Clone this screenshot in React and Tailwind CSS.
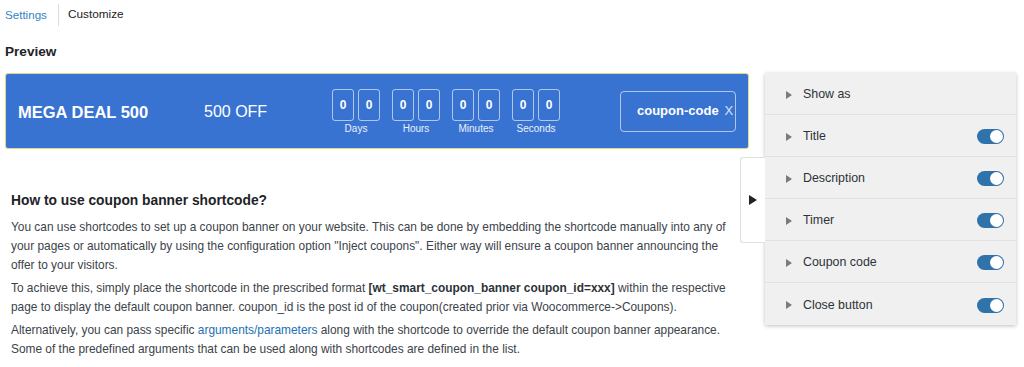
import React from "react";

const font = { fontFamily: "'Liberation Sans', Arial, sans-serif" };

function Digit() {
  return (
    <div className="w-[22px] h-[32px] border border-white/60 rounded-[3px] flex items-center justify-center text-[12px] font-bold text-white">
      0
    </div>
  );
}

function Unit({ label }) {
  return (
    <div className="flex flex-col items-center w-[50px]">
      <div className="flex gap-[4px]">
        <Digit />
        <Digit />
      </div>
      <div className="text-[10px] text-white/90 mt-[1px] leading-[14px]">{label}</div>
    </div>
  );
}

function Toggle() {
  return (
    <div className="w-[27px] h-[15px] rounded-full bg-[#3072aa] relative">
      <div className="absolute right-[1px] top-[1px] w-[13px] h-[13px] rounded-full bg-white" />
    </div>
  );
}

function Row({ label, toggle, last }) {
  return (
    <div className={`h-[42px] pt-[2px] flex items-center pl-[21px] pr-[12px] ${last ? "" : "border-b border-[#e2e2e2]"}`}>
      <svg width="6" height="8" viewBox="0 0 6 8" className="mr-[11px]">
        <path d="M0 0 L6 4 L0 8 Z" fill="#7a7a7a" />
      </svg>
      <span className="text-[12.4px] text-[#2c3338] flex-1">{label}</span>
      {toggle && <Toggle />}
    </div>
  );
}

export default function App() {
  return (
    <div className="w-[1024px] h-[367px] bg-white overflow-hidden relative" style={font}>
      <div className="flex items-center h-[30px] pl-[5px]">
        <span className="text-[11.6px] text-[#3582c4] pr-[11px]">Settings</span>
        <div className="w-px h-[22px] bg-[#dcdcde]" />
        <span className="text-[11.8px] text-[#1d2327] pl-[9px]">Customize</span>
      </div>
      <div className="flex">
        <div className="w-[760px] pl-[5px]">
          <h2 className="text-[13.6px] font-bold text-[#1d2327] mt-[11px] leading-[22px]">Preview</h2>
          <div className="mt-[10px] w-[744px] h-[76px] bg-[#3873d1] rounded-[3px] border border-[#d9dc8c] flex items-center text-white">
            <div className="pl-[12px] w-[198px] text-[16.5px] font-bold mt-[2px]">MEGA DEAL 500</div>
            <div className="w-[127px] text-[16px] mt-[2px]">500 OFF</div>
            <div className="flex gap-[10px] mt-[3px]">
              <Unit label="Days" />
              <Unit label="Hours" />
              <Unit label="Minutes" />
              <Unit label="Seconds" />
            </div>
            <div className="ml-[59px] w-[116px] h-[41px] border border-white/60 rounded-[4px] flex items-center pl-[16px] gap-[6px]">
              <span className="text-[13px] font-bold">coupon-code</span>
              <span className="text-[13px] font-light text-white/80">X</span>
            </div>
          </div>
          <div className="pl-[6px] w-[722px] mt-[41px] text-[#3c434a]">
            <h3 className="text-[13.8px] font-bold text-[#1d2327] leading-[22px]">How to use coupon banner shortcode?</h3>
            <p className="text-[11.9px] leading-[19px] mt-[6px]">
              You can use shortcodes to set up a coupon banner on your website. This can be done by embedding the shortcode manually into any of your pages or automatically by using the configuration option "Inject coupons". Either way will ensure a coupon banner announcing the offer to your visitors.
            </p>
            <p className="text-[11.9px] leading-[19px] mt-[4px]">
              To achieve this, simply place the shortcode in the prescribed format <b className="font-bold text-[#2c3338]">[wt_smart_coupon_banner coupon_id=xxx]</b> within the respective page to display the default coupon banner. coupon_id is the post id of the coupon(created prior via Woocommerce-&gt;Coupons).
            </p>
            <p className="text-[11.9px] leading-[19px] mt-[4px]">
              Alternatively, you can pass specific <span className="text-[#2271b1]">arguments/parameters</span> along with the shortcode to override the default coupon banner appearance. Some of the predefined arguments that can be used along with shortcodes are defined in the list.
            </p>
          </div>
        </div>
        <div className="relative mt-[43px] ml-[5px] w-[251px] h-[252px] bg-[#f0f0f0] shadow-[0_1px_4px_rgba(0,0,0,0.25)]">
          <div className="absolute left-[-25px] top-[84px] w-[25px] h-[86px] bg-white border border-[#e0e0e0] border-r-0 rounded-l-[3px] flex items-center justify-center">
            <svg width="8" height="10" viewBox="0 0 8 10">
              <path d="M0 0 L8 5 L0 10 Z" fill="#1d2327" />
            </svg>
          </div>
          <Row label="Show as" />
          <Row label="Title" toggle />
          <Row label="Description" toggle />
          <Row label="Timer" toggle />
          <Row label="Coupon code" toggle />
          <Row label="Close button" toggle last />
        </div>
      </div>
    </div>
  );
}
